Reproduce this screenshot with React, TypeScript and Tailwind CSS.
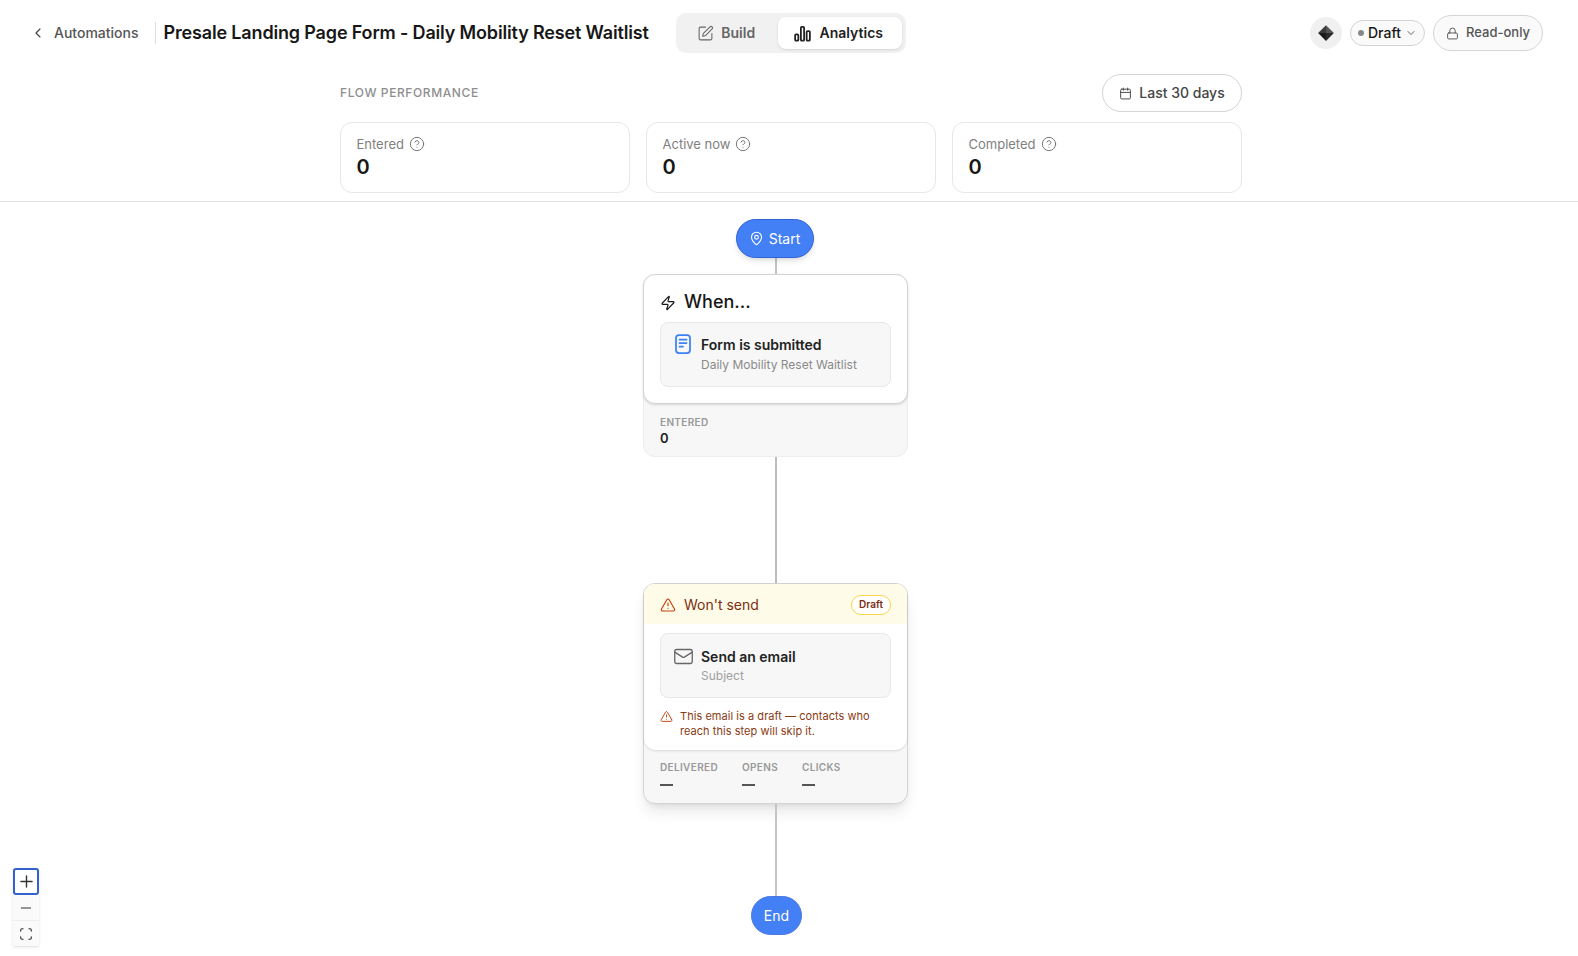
import { Calendar, ChevronDown, ChevronLeft, CircleHelp, Lock, Mail, MapPin, Minus, Plus, Scan, SquarePen, TriangleAlert, Zap } from "lucide-react";

function Bars() {
  return (
    <svg width="17" height="17" viewBox="0 0 18 18" fill="none" stroke="currentColor" strokeWidth="1.9">
      <rect x="1.2" y="10" width="3.4" height="6.5" rx="1" />
      <rect x="7.3" y="2" width="3.4" height="14.5" rx="1" />
      <rect x="13.4" y="6.5" width="3.4" height="10" rx="1" />
    </svg>
  );
}

function Doc() {
  return (
    <svg width="16" height="20" viewBox="0 0 16 20" fill="none" stroke="#3b82f6" strokeWidth="1.75" strokeLinecap="round" className="-mt-[2px] shrink-0">
      <rect x="1" y="1" width="14" height="18" rx="3" />
      <path d="M4.5 5.5h7M4.5 9h7M4.5 12.5h3.5" />
    </svg>
  );
}

function Gem() {
  return (
    <svg width="18" height="18" viewBox="0 0 16 16">
      <path d="M8 1 1 8h7z" fill="#3a3a3a" />
      <path d="M8 1l7 7H8z" fill="#555" />
      <path d="M1 8l7 7V8z" fill="#1c1c1c" />
      <path d="M15 8l-7 7V8z" fill="#2c2c2c" />
    </svg>
  );
}

function Metric({ label }: { label: string }) {
  return (
    <div className="flex-1 h-[71px] rounded-xl border border-[#e7e7e7] bg-white pl-[15.5px] pt-[12px]">
      <div className="flex items-center gap-[5px] text-[13px] leading-[18px] text-[#808080]">
        {label}
        <CircleHelp size={16} strokeWidth={1.5} className="text-[#777]" />
      </div>
      <div className="mt-[1px] text-[20px] leading-[26px] font-semibold text-[#171717]">0</div>
    </div>
  );
}

function Small({ label, dash }: { label: string; dash?: boolean }) {
  return (
    <div>
      <div className="text-[10px] leading-[14px] font-semibold tracking-[0.035em] text-[#999]">{label}</div>
      {dash ? <div className="mt-[10px] h-[1.5px] w-[13px] bg-[#555]" /> : <div className="text-[13px] leading-[18px] font-semibold text-[#222]">0</div>}
    </div>
  );
}

export default function App() {
  return (
    <div className="relative h-[956px] w-[1578px] overflow-hidden bg-white font-['Inter',sans-serif] text-[#171717]">
      <header className="flex h-[66px] items-center pl-[30px] pr-[35px]">
        <ChevronLeft size={16} strokeWidth={1.75} className="text-[#444]" />
        <span className="ml-2 text-sm font-medium text-[#555]">Automations</span>
        <div className="ml-4 mr-2 h-[22px] w-px bg-[#ddd]" />
        <h1 className="text-lg font-semibold whitespace-nowrap tracking-[-0.009em]">Presale Landing Page Form - Daily Mobility Reset Waitlist</h1>
        <div className="ml-[27px] flex h-[40px] items-center rounded-[10px] bg-[#f1f1f1] p-1">
          <div className="flex h-[32px] w-[98px] items-center justify-center gap-[7px] pr-[5px] text-sm font-semibold text-[#666]">
            <SquarePen size={17} strokeWidth={1.5} />
            Build
          </div>
          <div className="flex h-[32px] w-[124px] items-center justify-center gap-[8px] rounded-lg bg-white pr-[2px] text-sm font-semibold text-[#222] shadow-sm">
            <Bars />
            Analytics
          </div>
        </div>
        <div className="ml-auto flex items-center gap-2">
          <div className="flex size-8 items-center justify-center rounded-full bg-[#f0f0f0]">
            <Gem />
          </div>
          <div className="flex h-[26px] w-[75px] items-center justify-center gap-[4px] rounded-full border border-[#d4d4d4] bg-[#fafafa] text-sm font-medium">
            <span className="size-[6px] rounded-full bg-[#888]" />
            Draft
            <ChevronDown size={12} className="text-[#666]" />
          </div>
          <div className="flex h-[36px] w-[110px] items-center justify-center gap-[7px] rounded-full border border-[#d4d4d4] bg-[#fafafa] text-[13px] font-medium text-[#555]">
            <Lock size={13} strokeWidth={1.75} />
            Read-only
          </div>
        </div>
      </header>

      <section className="h-[136px] border-b border-[#e2e2e2] pl-[340px] pr-[336px]">
        <div className="flex h-[56px] items-start justify-between pt-2">
          <span className="pt-[11px] text-xs font-medium tracking-[0.05em] text-[#8e8e8e]">FLOW PERFORMANCE</span>
          <div className="flex h-[38px] w-[140px] items-center justify-center gap-[7px] rounded-full border border-[#d4d4d4] text-sm font-medium text-[#444]">
            <Calendar size={13} strokeWidth={1.75} />
            Last 30 days
          </div>
        </div>
        <div className="flex gap-4">
          <Metric label="Entered" />
          <Metric label="Active now" />
          <Metric label="Completed" />
        </div>
      </section>

      <main className="flex w-[265px] translate-x-[643px] flex-col items-center pt-[17px]">
        <div className="flex h-[39px] w-[78px] -translate-x-px items-center justify-center gap-[5px] rounded-full border border-[#2f62d6] bg-[#4480f5] text-sm text-white shadow-md">
          <MapPin size={15} strokeWidth={1.75} />
          Start
        </div>
        <div className="h-[16px] w-[2px] bg-[#c4c4c4]" />
        <div className="w-full rounded-xl border border-[#ececec] bg-[#f7f7f7]">
          <div className="-m-px rounded-xl border border-[#d4d4d4] bg-white px-4 pb-4 shadow-sm">
            <div className="flex h-[44px] items-end gap-[8px] pb-[3px] text-lg font-medium leading-[28px]">
              <Zap size={16} strokeWidth={1.75} className="mb-[5px]" />
              When...
            </div>
            <div className="mt-[3px] flex h-[65px] gap-[10px] rounded-lg border border-[#e8e8e8] bg-[#f7f7f7] pl-[14px] pt-[13px]">
              <Doc />
              <div>
                <div className="text-sm leading-[18px] font-semibold text-[#222]">Form is submitted</div>
                <div className="mt-[2px] text-xs leading-[17px] text-[#8a8a8a]">Daily Mobility Reset Waitlist</div>
              </div>
            </div>
          </div>
          <div className="h-[53px] px-4 pt-[12px]">
            <Small label="ENTERED" />
          </div>
        </div>
        <div className="h-[126px] w-[2px] bg-[#bebebe]" />
        <div className="w-full rounded-xl border border-[#d4d4d4] bg-[#f7f7f7] shadow-lg">
          <div className="rounded-t-[11px] rounded-b-xl bg-white shadow-sm">
            <div className="flex h-[40px] items-center gap-[8px] rounded-t-[11px] bg-[#fefce8] px-4 pt-px text-sm text-[#7c2d12]">
              <TriangleAlert size={16} strokeWidth={1.75} className="text-[#c2410c]" />
              Won't send
              <span className="ml-auto flex h-[20px] w-[40px] items-center justify-center rounded-full border border-[#fcd34d] bg-white text-[10px] font-semibold">Draft</span>
            </div>
            <div className="px-4 pt-[9px] pb-[11px]">
              <div className="flex h-[65px] gap-[7px] rounded-lg border border-[#e8e8e8] bg-[#f7f7f7] pl-[12px] pt-[12px]">
                <Mail size={21} strokeWidth={1.5} className="text-[#666]" />
                <div className="pt-[2px]">
                  <div className="text-sm leading-[18px] font-semibold text-[#222]">Send an email</div>
                  <div className="mt-[1px] text-xs leading-[17px] text-[#a0a0a0]">Subject</div>
                </div>
              </div>
              <div className="mt-[11px] flex gap-[7px] text-[11px] leading-[15px] tracking-[0.004em] text-[#8a3a12]">
                <TriangleAlert size={13} strokeWidth={1.75} className="mt-px shrink-0 text-[#c2410c]" />
                <p>This email is a draft — contacts who reach this step will skip it.</p>
              </div>
            </div>
          </div>
          <div className="flex h-[53px] gap-[24px] px-4 pt-[10px]">
            <Small label="DELIVERED" dash />
            <Small label="OPENS" dash />
            <Small label="CLICKS" dash />
          </div>
        </div>
        <div className="h-[92px] w-[2px] bg-[#c4c4c4]" />
        <div className="flex h-[39px] w-[51px] translate-x-px items-center justify-center rounded-full border border-[#4a78e0] bg-[#4480f5] text-sm text-white">End</div>
      </main>

      <div className="absolute left-[13px] top-[868px] flex w-[26px] flex-col bg-[#fafafa] text-[#333] shadow-sm">
        <div className="flex h-[27px] items-center justify-center rounded-[3px] border-2 border-[#3461cc] bg-white">
          <Plus size={19} strokeWidth={1.75} />
        </div>
        <div className="flex h-[26px] items-center justify-center border-b border-[#eee]">
          <Minus size={16} strokeWidth={1.5} />
        </div>
        <div className="flex h-[25px] items-center justify-center">
          <Scan size={14} strokeWidth={2} />
        </div>
      </div>
    </div>
  );
}
